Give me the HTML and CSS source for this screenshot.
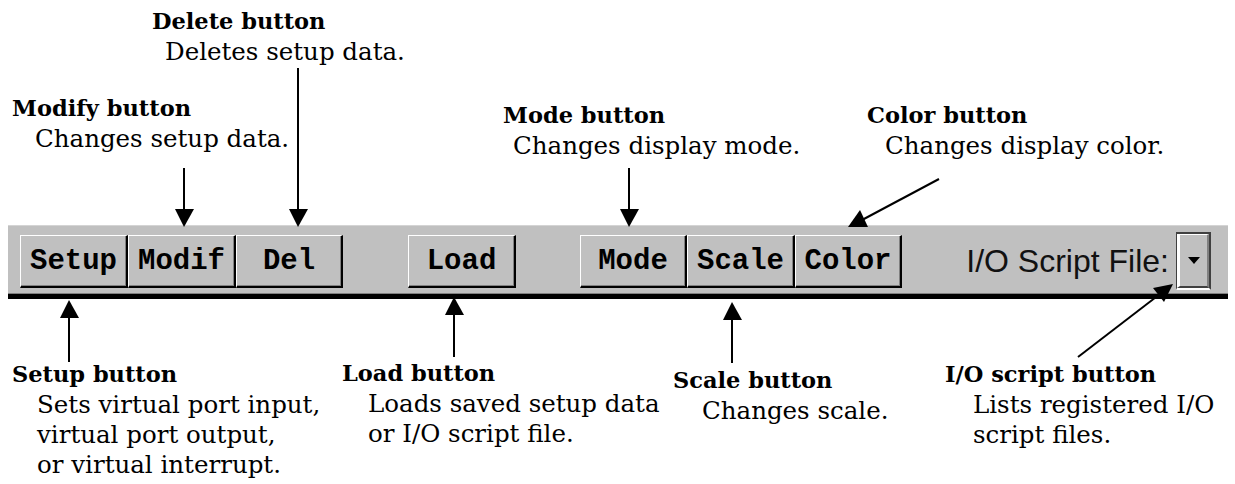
FILE: index.html
```html
<!DOCTYPE html>
<html lang="en">
  <head>
    <meta charset="UTF-8" />
    <meta name="viewport" content="width=device-width, initial-scale=1.0" />
    <title>Toolbar buttons</title>
    <link rel="stylesheet" href="styles.css">
  </head>
  <body>
    <div id="page">
      <!-- notes above the toolbar -->
      <div class="note note-delete">
        <h3>Delete button</h3>
        <p>Deletes setup data.</p>
      </div>
      <div class="note note-modify">
        <h3>Modify button</h3>
        <p>Changes setup data.</p>
      </div>
      <div class="note note-mode">
        <h3>Mode button</h3>
        <p>Changes display mode.</p>
      </div>
      <div class="note note-color">
        <h3>Color button</h3>
        <p>Changes display color.</p>
      </div>

      <div id="toolbar">
        <button class="btn w108">Setup</button>
        <button class="btn w108">Modif</button>
        <button class="btn w107">Del</button>
        <button class="btn w108 gap-load">Load</button>
        <button class="btn w107 gap-mode">Mode</button>
        <button class="btn w108">Scale</button>
        <button class="btn w107">Color</button>
        <div class="script-box">
          <span class="script-label">I/O Script File:</span>
          <div class="combo">
            <div class="combo-btn"><span class="tri"></span></div>
          </div>
        </div>
      </div>

      <!-- notes below the toolbar -->
      <div class="note note-setup">
        <h3>Setup button</h3>
        <p>Sets virtual port input,<br />virtual port output,<br />or virtual interrupt.</p>
      </div>
      <div class="note note-load">
        <h3>Load button</h3>
        <p>Loads saved setup data<br />or I/O script file.</p>
      </div>
      <div class="note note-scale">
        <h3>Scale button</h3>
        <p>Changes scale.</p>
      </div>
      <div class="note note-io">
        <h3>I/O script button</h3>
        <p>Lists registered I/O<br />script files.</p>
      </div>

      <svg id="arrows" viewBox="0 0 1235 484" width="1235" height="484">
        <g stroke="#000" stroke-width="2" fill="none">
          <line x1="184" y1="168" x2="184" y2="212" />
          <line x1="298" y1="68" x2="298" y2="212" />
          <line x1="629" y1="168" x2="629" y2="212" />
          <line x1="939" y1="179" x2="862" y2="220" />
          <line x1="69" y1="316" x2="69" y2="362" />
          <line x1="454" y1="313" x2="454" y2="357" />
          <line x1="732" y1="318" x2="732" y2="363" />
          <line x1="1078" y1="357" x2="1160" y2="294" />
        </g>
        <g fill="#000">
          <polygon points="175,209 194,209 184,227" />
          <polygon points="289,209 308,209 298,227" />
          <polygon points="620,209 639,209 629,227" />
          <polygon points="848,227 868,227 860,210" />
          <polygon points="60,318 79,318 69,300" />
          <polygon points="445,315 464,315 454,297" />
          <polygon points="723,320 742,320 732,302" />
          <polygon points="1173,284 1164,302 1153,288" />
        </g>
      </svg>
    </div>
  </body>
</html>
```

FILE: styles.css
```css
* {
  margin: 0px;
  box-sizing: border-box;
}

body {
  background-color: #fff;
}

#page {
  position: relative;
  width: 1235px;
  height: 484px;
  overflow: hidden;
  padding-top: 225px;
}

#arrows {
  position: absolute;
  left: 0px;
  top: 0px;
  pointer-events: none;
}

/* toolbar */

#toolbar {
  display: flex;
  align-items: flex-start;
  margin-left: 8px;
  margin-right: 7px;
  height: 74px;
  padding-top: 9px;
  padding-left: 12px;
  padding-right: 17px;
  background-color: #c0c0c0;
  border-top: 1px solid #d4d4d4;
  border-bottom: 5px solid #000;
  box-shadow: inset 0px -1px 0px #808080;
}

.btn {
  height: 53px;
  padding: 0px;
  background-color: #c0c0c0;
  border-style: solid;
  border-width: 1px 2px 2px 1px;
  border-color: #fff #000 #000 #fff;
  box-shadow: inset -1px -1px 0px #808080;
  font-family: "Liberation Mono", monospace;
  font-weight: bold;
  font-size: 29px;
  color: #000;
  text-align: center;
}

.w107 {
  width: 107px;
}
.w108 {
  width: 108px;
}
.gap-load {
  margin-left: 65px;
}
.gap-mode {
  margin-left: 64px;
}

.script-box {
  display: flex;
  align-items: center;
  gap: 7px;
  margin-left: auto;
  margin-top: -3px;
}

.script-label {
  font-family: "Liberation Sans", sans-serif;
  font-size: 32px;
  color: #111;
}

.combo {
  width: 35px;
  height: 58px;
  border-style: solid;
  border-width: 2px 2px 2px 1px;
  border-color: #404040 #404040 #fff #404040;
}

.combo-btn {
  display: flex;
  align-items: center;
  justify-content: center;
  height: 100%;
  border-style: solid;
  border-width: 1px 2px 2px 3px;
  border-color: #fff #808080 #404040 #fff;
  background-color: #c0c0c0;
}

.tri {
  width: 0px;
  height: 0px;
  border-left: 6px solid transparent;
  border-right: 6px solid transparent;
  border-top: 7px solid #000;
}

/* notes */

.note {
  position: absolute;
  font-family: "DejaVu Serif", serif;
  color: #000;
  white-space: nowrap;
}
.note h3 {
  font-size: 22.5px;
  font-weight: bold;
  line-height: 32px;
}
.note p {
  font-size: 24.5px;
  line-height: 30px;
}

.note-delete {
  left: 152px;
  top: 5px;
}
.note-delete p {
  padding-left: 13px;
}

.note-modify {
  left: 12px;
  top: 92px;
}
.note-modify p {
  padding-left: 23px;
}

.note-mode {
  left: 503px;
  top: 99px;
}
.note-mode p {
  padding-left: 10px;
}

.note-color {
  left: 867px;
  top: 99px;
}
.note-color p {
  padding-left: 18px;
}

.note-setup {
  left: 12px;
  top: 358px;
}
.note-setup p {
  padding-left: 25px;
}

.note-load {
  left: 342px;
  top: 357px;
}
.note-load p {
  padding-left: 26px;
}

.note-scale {
  left: 673px;
  top: 364px;
}
.note-scale p {
  padding-left: 29px;
}

.note-io {
  left: 945px;
  top: 358px;
}
.note-io p {
  padding-left: 28px;
}
```
